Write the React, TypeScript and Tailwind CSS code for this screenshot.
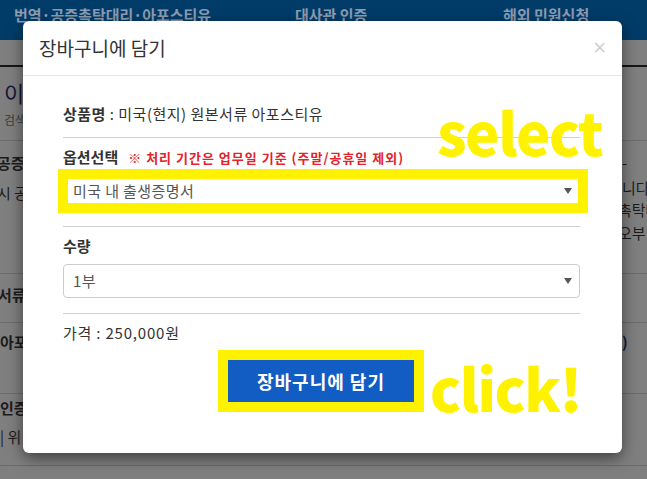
import React from 'react';

const KR = { fontFamily: '"Noto Sans CJK KR", "Noto Sans", sans-serif' };

function SelectBox({ value }: { value: string }) {
  return (
    <div className="flex h-[34px] w-full items-center justify-between rounded-[4px] border border-[#cccccc] bg-white pl-[9px] pr-[7px] text-[15px] tracking-[0.4px] text-[#555]">
      <span>{value}</span>
      <svg width="8" height="6" viewBox="0 0 8 6">
        <path d="M0 0 L8 0 L4 6 Z" fill="#555" />
      </svg>
    </div>
  );
}

function Divider() {
  return <div className="h-px w-full bg-[#d0d0d0]" />;
}

export default function App() {
  return (
    <div className="relative h-[479px] w-[647px] overflow-hidden bg-[#7f7f7f]" style={KR}>
      {/* top nav */}
      <div className="flex h-[40px] items-start bg-[#013c69] pl-[14px] pt-[5px] text-[15px] font-bold leading-[20px] text-[#8d9cb1]">
        <span className="w-[281px] shrink-0">번역·공증촉탁대리·아포스티유</span>
        <span className="w-[208px] shrink-0">대사관 인증</span>
        <span>해외 민원신청</span>
      </div>
      <div className="h-[25px]" />
      <div className="h-[2px] bg-[#161616]" />

      {/* page behind the overlay */}
      <div className="h-[73px] pl-[4px] pt-[11px]">
        <div className="text-[22px] leading-[28px] text-[#17173a]">이</div>
        <div className="mt-[7px] text-[12px] leading-[14px] text-[#3c3c3c]">검색</div>
      </div>
      <div className="h-px bg-[#6c6c6c]" />
      <div className="flex h-[132px] justify-between pt-[12px] text-[15px] leading-[20px] text-[#1c1c1c]">
        <div className="-ml-[3px]">
          <div className="font-bold">공증촉탁</div>
          <div className="mt-[10px]">시 공</div>
        </div>
        <div className="w-[25px] overflow-hidden whitespace-nowrap">
          <div className="h-[20px]">-</div>
          <div className="mt-[5px]">니다</div>
          <div className="mt-[2px] -ml-[4px]">촉탁대</div>
          <div className="mt-[3px] -ml-[4px]">오부 대</div>
        </div>
      </div>
      <div className="h-px bg-[#6c6c6c]" />
      <div className="h-[48px] pt-[11px] text-[15px] font-bold leading-[20px] text-[#1c1c1c]">
        <div className="-ml-[2px]">서류</div>
      </div>
      <div className="h-px bg-[#6c6c6c]" />
      <div className="flex h-[70px] justify-between pt-[9px] text-[15px] font-bold leading-[20px]">
        <div className="text-[#1c1c1c]">아포</div>
        <div className="w-[25px] overflow-hidden text-[#17173a]">)</div>
      </div>
      <div className="h-px bg-[#6c6c6c]" />
      <div className="h-[71px] pt-[4px] text-[15px] leading-[20px] text-[#1c1c1c]">
        <div className="font-bold">인증</div>
        <div className="mt-[9px]">| 위</div>
      </div>
      <div className="h-px bg-[#6c6c6c]" />

      {/* modal */}
      <div className="absolute left-[23px] top-[21px] h-[432px] w-[599px] rounded-[6px] bg-white shadow-[0_5px_15px_rgba(0,0,0,0.5)]">
        <div className="flex h-[55px] items-center justify-between border-b border-[#e5e5e5] pl-[16px] pr-[16px]">
          <span className="text-[19px] text-[#333]">장바구니에 담기</span>
          <span className="text-[22px] font-light leading-none text-[#cfcfcf]" style={{ fontFamily: '"Liberation Sans", sans-serif' }}>×</span>
        </div>
        <div className="relative pl-[40px] pr-[42px] text-[#333]">
          <div className="pt-[28px] pb-[13px] text-[15px] leading-[20px] tracking-[0.5px]">
            <span className="font-bold">상품명</span> : 미국(현지) 원본서류 아포스티유
          </div>
          <Divider />
          <div className="mt-[9px] flex items-baseline gap-[10px] leading-[20px]">
            <span className="text-[15px] font-bold">옵션선택</span>
            <span className="text-[13px] font-bold tracking-[1px] text-[#e3222a]">※ 처리 기간은 업무일 기준 (주말/공휴일 제외)</span>
          </div>
          <div className="relative mt-[6px]">
            <SelectBox value="미국 내 출생증명서" />
            <div className="absolute -bottom-[5px] -left-[5px] -right-[8px] -top-[5px] border-[10px] border-[#fff200]" />
          </div>
          <div className="mt-[18px]">
            <Divider />
          </div>
          <div className="mt-[9px] text-[15px] font-bold leading-[20px]">수량</div>
          <div className="mt-[8px]">
            <SelectBox value="1부" />
          </div>
          <div className="mt-[15px]">
            <Divider />
          </div>
          <div className="mt-[9px] text-[15px] leading-[20px] tracking-[0.8px]">가격 : 250,000원</div>
          <div className="mt-[7px] flex items-start pl-[155px]">
            <div className="border-[10px] border-[#fff200]">
              <button className="h-[42px] w-[186px] bg-[#125dc3] text-[18px] font-bold tracking-[1px] text-white">
                장바구니에 담기
              </button>
            </div>
            <span className="ml-[6px] mt-[8px] text-[58px] font-extrabold leading-none tracking-[-1.5px] text-[#fff200]">click!</span>
          </div>
          <span className="absolute left-[414px] top-[26px] text-[58px] font-extrabold leading-none tracking-[-1.5px] text-[#fff200]">select</span>
        </div>
      </div>
    </div>
  );
}
